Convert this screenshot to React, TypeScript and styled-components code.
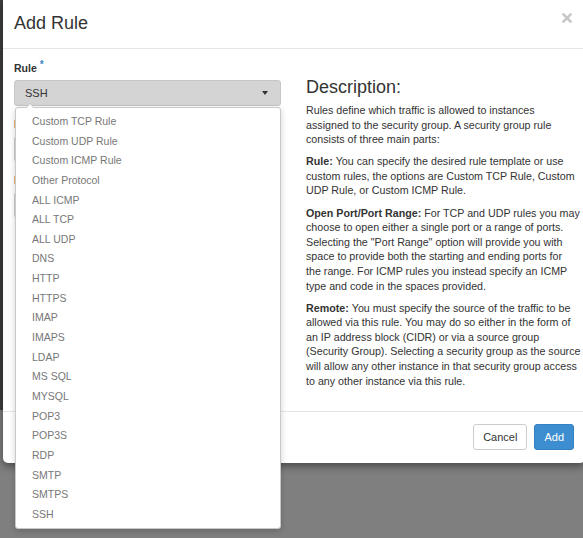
import React from 'react';
import styled, { createGlobalStyle } from 'styled-components';

const GlobalStyle = createGlobalStyle`
  html, body {
    margin: 0;
    padding: 0;
    background: #7f7f7f;
    overflow: hidden;
  }
  body {
    font-family: "Liberation Sans", Arial, sans-serif;
    color: #333;
  }
  * {
    box-sizing: border-box;
  }
`;

const RULE_OPTIONS = [
  'Custom TCP Rule',
  'Custom UDP Rule',
  'Custom ICMP Rule',
  'Other Protocol',
  'ALL ICMP',
  'ALL TCP',
  'ALL UDP',
  'DNS',
  'HTTP',
  'HTTPS',
  'IMAP',
  'IMAPS',
  'LDAP',
  'MS SQL',
  'MYSQL',
  'POP3',
  'POP3S',
  'RDP',
  'SMTP',
  'SMTPS',
  'SSH',
];

// help text, broken where the dialog breaks it
const HELP: { title?: string; lines: string[] }[] = [
  {
    lines: [
      'Rules define which traffic is allowed to instances',
      'assigned to the security group. A security group rule',
      'consists of three main parts:',
    ],
  },
  {
    title: 'Rule:',
    lines: [
      'You can specify the desired rule template or use',
      'custom rules, the options are Custom TCP Rule, Custom',
      'UDP Rule, or Custom ICMP Rule.',
    ],
  },
  {
    title: 'Open Port/Port Range:',
    lines: [
      'For TCP and UDP rules you may',
      'choose to open either a single port or a range of ports.',
      'Selecting the "Port Range" option will provide you with',
      'space to provide both the starting and ending ports for',
      'the range. For ICMP rules you instead specify an ICMP',
      'type and code in the spaces provided.',
    ],
  },
  {
    title: 'Remote:',
    lines: [
      'You must specify the source of the traffic to be',
      'allowed via this rule. You may do so either in the form of',
      'an IP address block (CIDR) or via a source group',
      '(Security Group). Selecting a security group as the source',
      'will allow any other instance in that security group access',
      'to any other instance via this rule.',
    ],
  },
];

const Page = styled.div`
  display: flex;
  align-items: flex-start;
  width: 583px;
  height: 538px;
  overflow: hidden;
`;

const PageBehind = styled.div`
  width: 3px;
  height: 410px;
  flex-shrink: 0;
  background: #3e3e3e;
`;

const Modal = styled.div`
  width: 582px;
  height: 463px;
  flex-shrink: 0;
  display: flex;
  flex-direction: column;
  background: #fff;
  border-radius: 0 0 5px 5px;
  box-shadow: 0 3px 9px rgba(0, 0, 0, 0.45);
`;

const Header = styled.div`
  height: 49px;
  padding: 0 11px;
  display: flex;
  align-items: center;
  justify-content: space-between;
  border-bottom: 1px solid #e5e5e5;
`;

const Title = styled.h4`
  margin: 0 0 2px;
  font-size: 18px;
  font-weight: normal;
  line-height: 20px;
  color: #333;
`;

const Close = styled.button`
  width: 10px;
  height: 10px;
  padding: 0;
  margin: 0 2px 13px 0;
  border: 0;
  background: none;
  display: flex;
`;

const Body = styled.div`
  flex: 1;
  padding: 12px 11px 0;
  display: grid;
  grid-template-columns: 267px 1fr;
  column-gap: 25px;
  align-items: start;
`;

const FormColumn = styled.div`
  position: relative;
`;

const Group = styled.div`
  margin-bottom: 11px;
`;

const Label = styled.label`
  display: block;
  margin-bottom: 4px;
  font-size: 10.5px;
  font-weight: bold;
  line-height: 15px;
  color: #333;
`;

const Required = styled.span`
  position: relative;
  top: -4px;
  margin-left: 3px;
  font-size: 10px;
  color: #3a87c8;
`;

const SelectBox = styled.div<{ $active?: boolean }>`
  height: 26px;
  padding: 0 12px 0 10px;
  display: flex;
  align-items: center;
  justify-content: space-between;
  font-size: 11px;
  color: #333;
  background: ${(p) => (p.$active ? '#d4d4d4' : '#fff')};
  border: 1px solid ${(p) => (p.$active ? '#c6c6c6' : '#ccc')};
  border-radius: 3px;
`;

const Caret = styled.span`
  width: 0;
  height: 0;
  border-left: 3.5px solid transparent;
  border-right: 3.5px solid transparent;
  border-top: 4px solid #333;
`;

const TextInput = styled.div`
  height: 26px;
  border: 1px solid #ccc;
  border-radius: 3px;
  background: #fff;
`;

const Menu = styled.ul`
  position: absolute;
  top: 46px;
  left: 1px;
  width: 266px;
  margin: 0;
  padding: 4px 0;
  list-style: none;
  background: #fff;
  border: 1px solid #c9c9c9;
  border-radius: 3px;
  box-shadow: 0 2px 6px rgba(0, 0, 0, 0.18);
  z-index: 2;

  &::before,
  &::after {
    content: '';
    position: absolute;
    left: 10px;
    width: 0;
    height: 0;
    border-left: 4px solid transparent;
    border-right: 4px solid transparent;
  }

  &::before {
    top: -5px;
    border-bottom: 5px solid #c9c9c9;
  }

  &::after {
    top: -4px;
    border-bottom: 5px solid #fff;
  }
`;

const MenuItem = styled.li`
  height: 19.65px;
  padding: 0 16px;
  font-size: 10.5px;
  line-height: 19.65px;
  color: #777;
  white-space: nowrap;
`;

const InfoColumn = styled.div`
  padding-top: 16px;
  margin-right: -10px;
`;

const InfoTitle = styled.h3`
  margin: 0 0 6px;
  font-size: 18px;
  font-weight: normal;
  line-height: 20px;
  color: #333;
`;

const InfoText = styled.p`
  margin: 0 0 7.5px;
  font-size: 10.7px;
  line-height: 14.6px;
  color: #333;

  strong {
    font-weight: bold;
    margin-right: 0.28em;
  }
`;

const Line = styled.span`
  display: block;
  white-space: nowrap;
`;

const Footer = styled.div`
  padding: 12px 11px 13px;
  display: flex;
  justify-content: flex-end;
  gap: 7px;
  border-top: 1px solid #e5e5e5;
`;

const Button = styled.button<{ $primary?: boolean }>`
  height: 26px;
  padding: 0 9px;
  font-family: inherit;
  font-size: 11px;
  border-radius: 3px;
  border: 1px solid ${(p) => (p.$primary ? '#3580c2' : '#ccc')};
  background: ${(p) => (p.$primary ? '#3d8ed1' : '#fff')};
  color: ${(p) => (p.$primary ? '#fff' : '#333')};
`;

const CloseIcon = () => (
  <svg width="10" height="10" viewBox="0 0 10 10">
    <path d="M1.5 1.5 L8.5 8.5 M8.5 1.5 L1.5 8.5" stroke="#c8c8c8" strokeWidth="2.6" strokeLinecap="square" />
  </svg>
);

export default function App() {
  return (
    <>
      <GlobalStyle />
      <Page>
        <PageBehind />
        <Modal>
          <Header>
            <Title>Add Rule</Title>
            <Close aria-label="Close">
              <CloseIcon />
            </Close>
          </Header>
          <Body>
            <FormColumn>
              <Group>
                <Label>
                  Rule<Required>*</Required>
                </Label>
                <SelectBox $active>
                  <span>SSH</span>
                  <Caret />
                </SelectBox>
              </Group>
              <Group>
                <Label>Description</Label>
                <TextInput />
              </Group>
              <Group>
                <Label>
                  Remote<Required>*</Required>
                </Label>
                <SelectBox>
                  <span>CIDR</span>
                  <Caret />
                </SelectBox>
              </Group>
              <Menu>
                {RULE_OPTIONS.map((option) => (
                  <MenuItem key={option}>{option}</MenuItem>
                ))}
              </Menu>
            </FormColumn>
            <InfoColumn>
              <InfoTitle>Description:</InfoTitle>
              {HELP.map((para, i) => (
                <InfoText key={i}>
                  {para.lines.map((line, j) => (
                    <Line key={j}>
                      {j === 0 && para.title && <strong>{para.title}</strong>}
                      {line}
                    </Line>
                  ))}
                </InfoText>
              ))}
            </InfoColumn>
          </Body>
          <Footer>
            <Button>Cancel</Button>
            <Button $primary>Add</Button>
          </Footer>
        </Modal>
      </Page>
    </>
  );
}
